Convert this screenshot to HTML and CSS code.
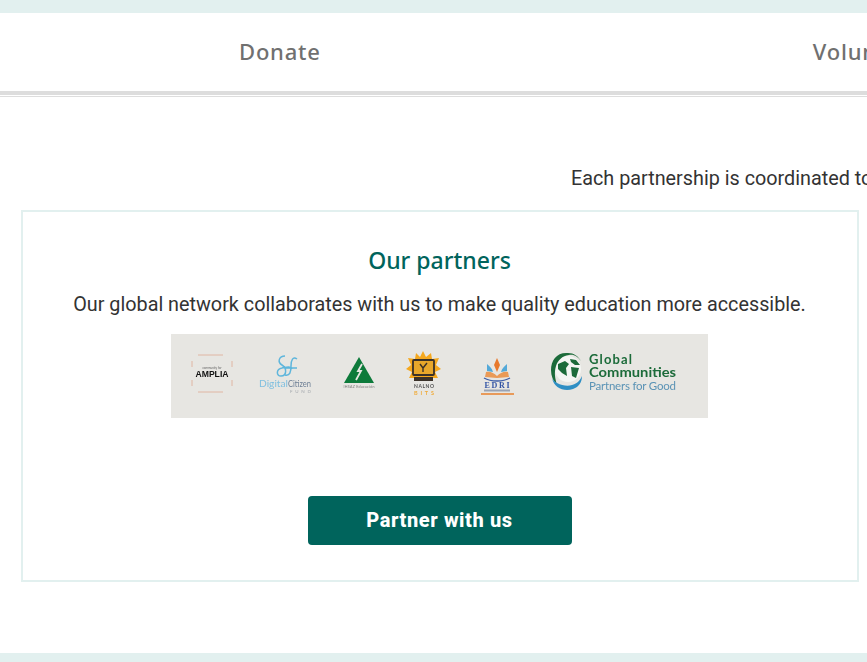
FILE: index.html
```html
<!DOCTYPE html>
<html>
<head>
    <title>Our partners</title>
    <link rel="stylesheet" href="styles.css">
</head>
<body>

<div class="band band-top"></div>

<!-- Tabs, wider than the window -->
<nav class="tabs">
    <a class="tab" href="#">Donate</a>
    <a class="tab" href="#">Volunteer</a>
</nav>

<main class="content">
    <p class="intro">Each partnership is coordinated to meet local needs</p>

    <section class="card">
        <h2 class="card-title">Our partners</h2>
        <p class="card-text">Our global network collaborates with us to make quality education more accessible.</p>

        <div class="logos">
            <svg class="logos-art" width="537" height="84" viewBox="0 0 537 84">
                <!-- Amplia -->
                <g stroke="#dfa995" stroke-width="0.8" fill="none">
                    <path d="M27 21H52M27 58H52M21 27V33M21 46V52M61 27V33M61 46V52"/>
                </g>
                <text x="41" y="35" class="t-mid" font-size="3" fill="#666">community for</text>
                <text x="41" y="43" class="t-mid" font-size="8.500" font-weight="700" fill="#111" textLength="33" lengthAdjust="spacingAndGlyphs" font-family="Liberation Sans">AMPLIA</text>

                <!-- Digital Citizen Fund -->
                <g stroke="#5fb6dc" stroke-width="1.5" fill="none">
                    <path d="M114 22C108 22 106 28 111 31C116 34 116 42 110 42C105 42 105 35 111 34C116 33 120 32 121 35"/>
                    <path d="M126 25C122 22 120 26 120 32C120 38 119 42 114 41M115 34H126"/>
                </g>
                <text x="88" y="53" font-size="10" fill="#7fbfdf" textLength="29" lengthAdjust="spacingAndGlyphs">Digital</text>
                <text x="117" y="53" font-size="10" fill="#6d7f95" textLength="23" lengthAdjust="spacingAndGlyphs">Citizen</text>
                <text x="119" y="58.500" font-size="4.500" fill="#a5a9ae" textLength="21">FUND</text>

                <!-- Triangle mark -->
                <path d="M188 23L203 49H173Z" fill="#0d7a3a"/>
                <path d="M191 30L187 37H190L185 46" stroke="#e7e6e2" stroke-width="1.800" fill="none"/>
                <text x="188" y="54" class="t-mid" font-size="3.600" fill="#777" textLength="31">IHSAZ Educación</text>

                <!-- Nalno Bits -->
                <path d="M252 17L255 23L260 19L261 25L268 24L265 31L270 35L264 38L267 44H238L241 38L235 35L240 31L237 24L244 25L245 19L249 23Z" fill="#f5a81e"/>
                <rect x="242" y="26" width="21" height="15" rx="1" fill="#e8a72a" stroke="#3a3128" stroke-width="1.800"/>
                <path d="M249 30L252 34L256 29M252 34V38" stroke="#3a3128" stroke-width="1.400" fill="none"/>
                <rect x="243" y="43" width="19" height="4" fill="#3a3128"/>
                <text x="253" y="54" class="t-mid" font-size="5" font-weight="700" fill="#555" textLength="20">NALNO</text>
                <text x="253" y="61" class="t-mid" font-size="5.500" font-weight="700" fill="#f0ab3a" textLength="20">BITS</text>

                <!-- EDRI -->
                <path d="M326 24L329 31L326 38L323 31Z" fill="#e8792c"/>
                <path d="M316 30C318 32 321 34 322 38L316 37ZM336 30C334 32 331 34 330 38L336 37Z" fill="#54a9d8"/>
                <path d="M315 38C319 37 323 39 326 42C329 39 333 37 337 38L338 43L326 44L314 43Z" fill="#ea9a57"/>
                <path d="M313 44C320 48 332 48 339 44" stroke="#3d5ea8" stroke-width="1.400" fill="none"/>
                <text x="326" y="54" class="t-mid" font-size="8" font-weight="700" fill="#3354a5" textLength="25" font-family="Liberation Serif">EDRI</text>
                <rect x="313" y="55.500" width="26" height="2" fill="#9aa3b4"/>
                <rect x="310" y="59" width="33" height="2" fill="#e89a5a"/>

                <!-- Global Communities -->
                <circle cx="397" cy="35" r="13" fill="#f4f6f3"/>
                <path d="M397 19C386 18 380 26 380 36C380 42 382 47 386 51C384 44 383 39 385 32C387 26 391 22 398 21C403 20 407 23 410 27C407 22 403 19 397 19Z" fill="#1c6b3a"/>
                <path d="M411 42C407 52 396 54 386 49C383 47 381 45 381 44C383 54 393 58 402 55C408 53 411 48 411 42Z" fill="#2f8fc4"/>
                <path d="M387 30L394 27L398 30L395 34L396 42L391 39L387 35ZM399 25L405 26L409 31L404 31L400 28ZM400 33L408 34L405 44L401 42Z" fill="#1c6b3a"/>
                <text x="418" y="30" font-size="13" font-weight="700" fill="#1c6b3a" textLength="43">Global</text>
                <text x="418" y="43" font-size="13" font-weight="700" fill="#1c6b3a" textLength="87" lengthAdjust="spacingAndGlyphs">Communities</text>
                <text x="418" y="56" font-size="11.500" fill="#5b93b5" textLength="87">Partners for Good</text>
            </svg>
        </div>

        <a class="btn" href="#">Partner with us</a>
    </section>
</main>

<div class="band band-bottom"></div>

</body>
</html>
```

FILE: styles.css
```css
html, body {
    margin: 0;
    padding: 0;
}

body {
    width: 867px;
    height: 662px;
    overflow: hidden;
    display: flex;
    flex-direction: column;
    background-color: #fff;
    color: #333;
    font-family: Roboto, sans-serif;
}

.band {
    background-color: #e2f0ef;
    flex: none;
}

.band-top {
    height: 13px;
}

.band-bottom {
    height: 9px;
}

.tabs {
    display: flex;
    flex: none;
    gap: 492px;
    height: 76px;
    padding: 0 0 2px 239px;
    align-items: center;
    white-space: nowrap;
    border-bottom: 4px solid #ddd;
}

.tab {
    color: #707070;
    font-family: "Noto Sans", sans-serif;
    font-size: 22px;
    font-weight: 500;
    letter-spacing: 0.8px;
    text-decoration: none;
}

.content {
    flex: 1;
    min-height: 0;
    border-top: 1px solid #ddd;
    margin-top: 1px;
    padding: 0 8px 0 21px;
    display: flex;
    flex-direction: column;
}

.intro {
    margin: 70px 0 19px 550px;
    font-size: 19.800px;
    line-height: 24px;
    white-space: nowrap;
}

.card {
    box-sizing: border-box;
    width: 838px;
    height: 372px;
    padding-right: 1px;
    border: 2px solid #e2f0ef;
    display: flex;
    flex-direction: column;
    align-items: center;
}

.card-title {
    margin: 32px 0 0;
    color: #00645c;
    font-family: "Noto Sans", sans-serif;
    font-size: 23px;
    font-weight: 500;
    line-height: 32px;
}

.card-text {
    margin: 17px 0 0;
    font-size: 19.800px;
    line-height: 24px;
    white-space: nowrap;
}

.logos {
    width: 537px;
    height: 84px;
    margin-top: 17px;
    background-color: #e7e6e2;
}

.logos-art {
    display: block;
    font-family: Lato, sans-serif;
    filter: blur(0.3px);
}

.t-mid {
    text-anchor: middle;
}

.btn {
    width: 264px;
    height: 49px;
    margin-top: 78px;
    background-color: #00645c;
    border-radius: 4px;
    color: #fff;
    font-size: 20px;
    font-weight: 800;
    letter-spacing: 0.6px;
    line-height: 49px;
    text-align: center;
    text-decoration: none;
}
```
